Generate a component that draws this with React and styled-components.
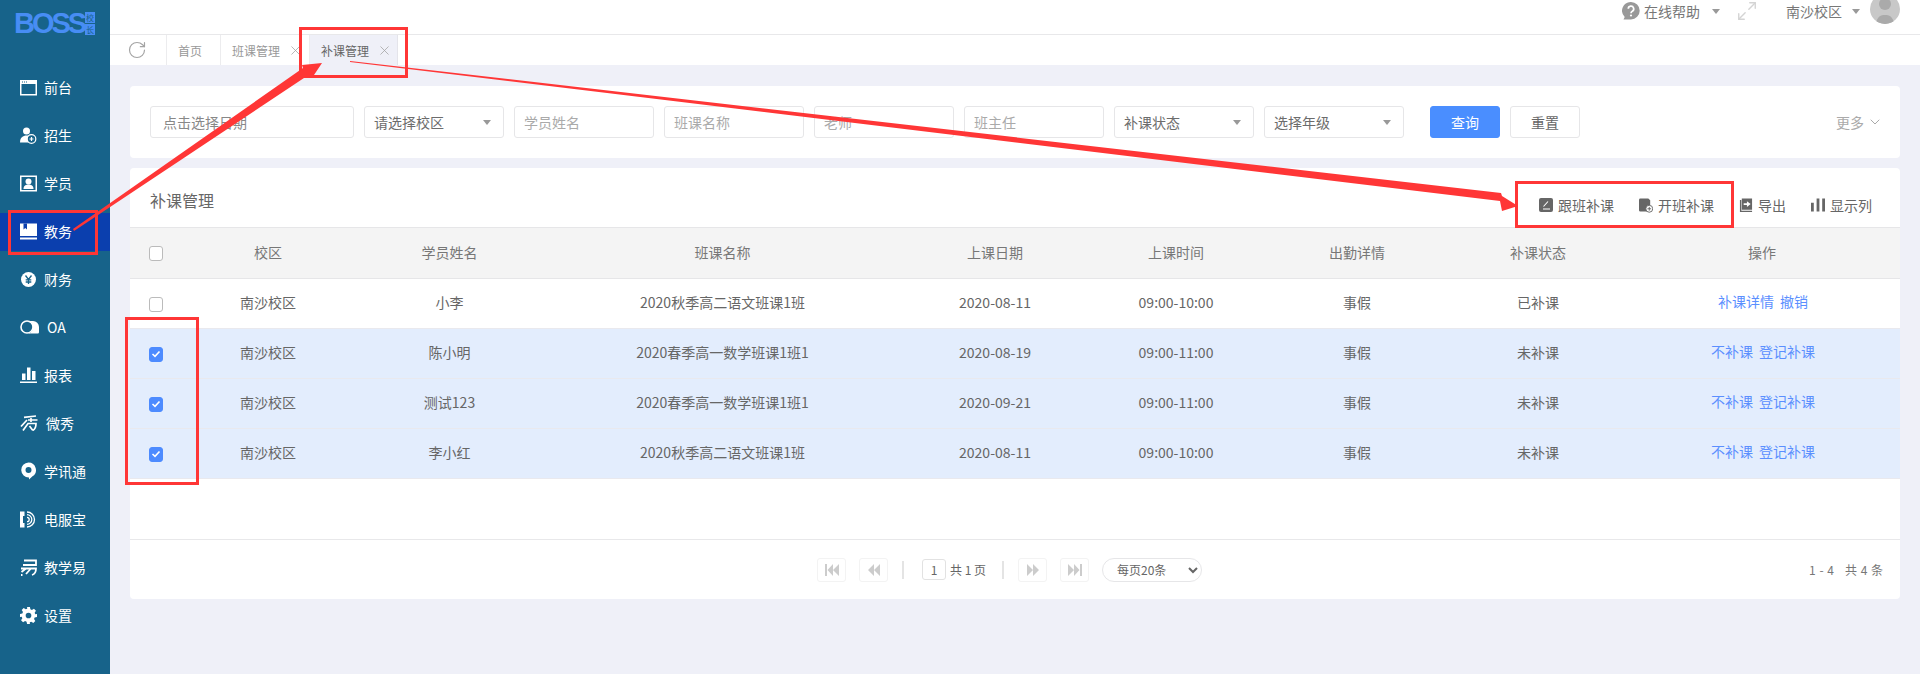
import React from "react";
import styled, { createGlobalStyle } from "styled-components";
import { RotateCw, X, ChevronDown, Maximize2 } from "lucide-react";

const Global = createGlobalStyle`
  html, body { margin: 0; padding: 0; height: 100%; }
  body { font-family: "Noto Sans CJK SC", "Noto Sans", "Liberation Sans", sans-serif; font-size: 14px; color: #666; background: #eff0f8; overflow: hidden; }
  * { box-sizing: border-box; }
`;

const Page = styled.div`position: relative; display: flex; width: 1920px; height: 674px; overflow: hidden;`;
const Sidebar = styled.aside`width: 110px; flex: none; background: #17638a; display: flex; flex-direction: column;`;
const Logo = styled.div`height: 64px; padding: 12px 0 0 14px; display: flex; align-items: flex-start;`;
const LogoWord = styled.span`font: 700 29px/22px "Liberation Sans", sans-serif; letter-spacing: -3px; color: #478df4; width: 71px;`;
const LogoSeal = styled.span`display: flex; flex-direction: column; gap: 1px; line-height: 0;`;
const SealChar = styled.span`width: 10px; height: 11px; background: #478df4; color: #17638a; font-size: 8px; line-height: 11px; text-align: center;`;
const NavList = styled.nav`display: flex; flex-direction: column;`;
const NavItem = styled.div`height: 48px; padding: 5px 0; display: flex; align-items: center;`;
const NavInner = styled.div`
  width: 100%; height: 38px; padding: 0 0 2px 20px; display: flex; align-items: center; gap: ${p => p.$gap}px;
  color: #fff; font-size: 14px; background: ${p => p.$active ? "#0b3fae" : "transparent"};
  svg { flex: none; }
`;
const Main = styled.div`flex: 1; min-width: 0; display: flex; flex-direction: column;`;
const TopBar = styled.header`height: 35px; flex: none; background: #fff; border-bottom: 1px solid #e8e8ea; display: flex; justify-content: flex-end; padding-right: 20px; overflow: hidden; color: #777;`;
const TopItem = styled.div`display: flex; align-items: center; height: 22px; margin-left: ${p => p.$ml || 0}px; gap: ${p => p.$gap || 0}px; white-space: nowrap;`;
const Caret = styled.span`width: 0; height: 0; border-left: 4px solid transparent; border-right: 4px solid transparent; border-top: 5px solid ${p => p.$c || "#999"}; flex: none;`;
const Avatar = styled.div`width: 30px; height: 30px; margin: -6px 0 0 10px; border-radius: 50%; background: #c8c8c8; overflow: hidden; flex: none;`;
const TabBar = styled.div`height: 30px; flex: none; background: #fff; display: flex; color: #999; font-size: 12px;`;
const Refresh = styled.div`width: 56px; padding-right: 2px; display: flex; align-items: center; justify-content: center; color: #a4a4a4;`;
const Tab = styled.div`
  width: ${p => p.$w}px; padding-left: 11px; display: flex; align-items: center; gap: 8px; border-left: 1px solid #ececee;
  background: ${p => p.$active ? "#eff0f8" : "#fff"}; color: ${p => p.$active ? "#666" : "#999"};
  ${p => p.$active ? "border-right: 1px solid #e4e4ea;" : ""}
  svg { color: #a0a0a0; flex: none; }
`;
const Content = styled.main`flex: 1; padding: 21px 20px 0; display: flex; flex-direction: column; gap: 10px;`;
const FilterCard = styled.section`height: 72px; background: #fff; border-radius: 4px; padding: 20px 20px; display: flex; align-items: flex-start;`;
const Field = styled.input`
  width: ${p => p.$w || 140}px; height: 32px; margin-right: 10px; padding: 0 ${p => p.$pl || 9}px; border: 1px solid #e6e6e8; border-radius: 3px; outline: none;
  background: #fff; font: inherit; font-size: 14px; color: #666;
  &::placeholder { color: ${p => p.$ph || "#aaa"}; opacity: 1; }
`;
const SelectBox = styled.div`
  width: 140px; height: 32px; margin-right: 10px; padding: 0 12px 0 9px; border: 1px solid #e6e6e8; border-radius: 3px; display: flex; align-items: center; justify-content: space-between; color: #6c6c6c;
`;
const Btn = styled.button`
  width: ${p => p.$w}px; height: 32px; margin-left: ${p => p.$ml || 0}px; border-radius: 3px; font: inherit; font-size: 14px; cursor: pointer;
  border: 1px solid ${p => p.$primary ? "#4a8eff" : "#e6e6e8"}; background: ${p => p.$primary ? "#4a8eff" : "#fff"}; color: ${p => p.$primary ? "#fff" : "#666"};
`;
const More = styled.div`margin: 0 -3px 0 auto; height: 32px; display: flex; align-items: center; gap: 3px; color: #aaa; svg { color: #aaa; }`;
const TableCard = styled.section`height: 431px; background: #fff; border-radius: 4px; display: flex; flex-direction: column; overflow: hidden;`;
const CardHead = styled.div`height: 60px; flex: none; padding: 15px 28px 0 20px; display: flex; align-items: center; border-bottom: 1px solid #e6e6e8;`;
const CardTitle = styled.h2`margin: 0 0 10px; font-size: 16px; font-weight: 400; color: #666;`;
const Tools = styled.div`margin-left: auto; display: flex; align-items: center; gap: 25px;`;
const Tool = styled.div`display: flex; align-items: center; gap: 5px; color: #666; svg { flex: none; }`;
const cols = "52px 172px 191px 355px 190px 172px 190px 172px 276px";
const TableWrap = styled.div`flex: 1; min-height: 0;`;
const HeadRow = styled.div`display: grid; grid-template-columns: ${cols}; height: 51px; padding-bottom: 3px; background: #f4f4f4; box-shadow: inset 0 -1px 0 #e6e6e8; align-items: center; text-align: center; color: #777;`;
const Row = styled.div`display: grid; grid-template-columns: ${cols}; height: 50px; padding-bottom: 4px; background: ${p => p.$sel ? "#e3edfd" : "#fff"}; box-shadow: inset 0 -1px 0 #e9e9ee; align-items: center; text-align: center; color: #666;`;
const CheckCell = styled.div`display: flex; justify-content: flex-end; padding-right: 19px; padding-top: ${p => p.$pt}px;`;
const Check = styled.span`
  width: 14px; height: 15px; border-radius: 3px; display: flex; align-items: center; justify-content: center;
  background: ${p => p.$on ? "#4d8bff" : "#fff"}; border: 1px solid ${p => p.$on ? "#4d8bff" : "#bbb"};
`;
const Actions = styled.div`display: flex; justify-content: center; gap: 6px; color: #5b8fff; padding: 0 0 3px 2px;`;
const Footer = styled.footer`height: 60px; flex: none; border-top: 1px solid #e8e8ea; display: grid; grid-template-columns: 687px auto 1fr; align-items: center; font-size: 12px; color: #666;`;
const Pager = styled.div`grid-column: 2; display: flex; align-items: center;`;
const PageBtn = styled.div`width: 29px; height: 24px; margin-right: ${p => p.$mr || 0}px; border: 1px solid #f3f3f3; border-radius: 3px; display: flex; align-items: center; justify-content: center;`;
const Sep = styled.span`width: 2px; height: 18px; background: #e4e4e4; margin: 0 ${p => p.$mr || 18}px 0 ${p => p.$ml || 14}px;`;
const PageNum = styled.div`width: 24px; height: 21px; border: 1px solid #e2e2e2; border-radius: 3px; text-align: center; line-height: 19px; margin-right: 4px; font-size: 12px;`;
const PageSize = styled.select`
  width: 100px; height: 24px; margin-left: 13px; padding-left: 10px; border: 1px solid #e6e6e8; border-radius: 12px; background: #fff; font: inherit; font-size: 12px; color: #666; outline: none;
`;
const Range = styled.div`grid-column: 3; justify-self: end; padding-right: 17px; word-spacing: 1px; color: #777;`;

const Overlay = styled.svg`position: absolute; left: 0; top: 0; width: 1920px; height: 674px; pointer-events: none;`;
const RedBox = styled.div`
  position: absolute; left: ${p => p.$x}px; top: ${p => p.$y}px; width: ${p => p.$w}px; height: ${p => p.$h}px;
  border: 3px solid #ff3636; pointer-events: none;
`;

const Calendar = () => <svg width="17" height="17" viewBox="0 0 17 17" fill="#fff"><path fillRule="evenodd" d="M0 1h17v15.500H0zM1.500 5v10h14V5zM2 2.500v1h1v-1zM4 2.500v1h1v-1zM6 2.500v1h1v-1z"/></svg>;
const UserPlus = () => <svg width="17" height="17" viewBox="0 0 17 17"><circle cx="6.500" cy="4" r="3.500" fill="#fff"/><path d="M0 15.500c0-5 3-7 6.500-7s4 1 4 1l-2 6z" fill="#fff"/><circle cx="11.500" cy="12" r="4.300" fill="#17638a" stroke="#fff" strokeWidth="1.200"/><path d="M9.500 12h4M11.500 10v4" stroke="#fff" strokeWidth="1.200"/></svg>;
const Student = () => <svg width="17" height="17" viewBox="0 0 17 17"><path fillRule="evenodd" fill="#fff" d="M0 .5h17v16H0zM1.500 2v13h14V2z"/><circle cx="8.500" cy="6.500" r="3" fill="#fff"/><path d="M3.500 14c0-3.500 2.500-4.500 5-4.500s5 1 5 4.500z" fill="#fff"/></svg>;
const Book = () => <svg width="17" height="17" viewBox="0 0 17 17"><path d="M0 .5h17v12.500H0z" fill="#fff"/><path d="M0 14.500h17v2H0z" fill="#fff"/><path d="M3.500 .5h3.500v6L5.250 5 3.500 6.500z" fill="#0b3fae"/></svg>;
const Yen = () => <svg width="17" height="17" viewBox="0 0 17 17"><circle cx="8.500" cy="8.500" r="7.500" fill="#fff"/><path d="M5.500 4.500l3 4 3-4M8.500 8.500v4.500M5.700 8.800h5.600M5.700 11h5.600" stroke="#17638a" strokeWidth="1.300" fill="none"/></svg>;
const Oa = () => <svg width="19" height="14" viewBox="0 0 19 14"><circle cx="7" cy="7" r="6" fill="none" stroke="#fff" strokeWidth="1.600"/><path d="M7.500 1h5.500a6 6 0 0 1 6 6v5c0 1-.6 1.500-1.500 1.500H8a6.400 6.400 0 0 0 0-12.500z" fill="#fff"/></svg>;
const Bars = () => <svg width="17" height="16" viewBox="0 0 17 16" fill="#fff"><path d="M2 6.500h3.500v6.500H2zM7 .5h3.500V13H7zM12 4h3.500v9H12zM0 14.500h17V16H0z"/></svg>;
const Xiu = () => <svg width="18" height="16" viewBox="0 0 18 16" fill="none" stroke="#fff" strokeWidth="1.700"><path d="M4 2.300L16 1M8 5h9.500M7 5L1 11.500M11 1.500v5.500M3 15.500L8 8.500h8c0 3-1 6-3.500 7M9.500 11l3 4"/></svg>;
const Pin = () => <svg width="17" height="18" viewBox="0 0 17 18"><path fillRule="evenodd" fill="#fff" d="M8.500 .5a7.500 7.500 0 0 1 4 13.800L9 17.500V15.500A7.500 7.500 0 0 1 8.500 .5zM8.500 5a3 3 0 1 0 0 6 3 3 0 0 0 0-6z"/></svg>;
const Phone = () => <svg width="17" height="17" viewBox="0 0 17 17" fill="none" stroke="#fff" strokeWidth="1.300"><path d="M0 .5h4.500v4.500H3v7h1.500v4.500H0z" fill="#fff" stroke="none"/><path d="M7 1a7.500 7.500 0 0 1 0 15M7 3.700a4.800 4.800 0 0 1 0 9.600M7 6.300a2.200 2.200 0 0 1 0 4.400"/></svg>;
const Yi = () => <svg width="17" height="17" viewBox="0 0 17 17" fill="none" stroke="#fff" strokeWidth="1.800"><path d="M4 1.500h12V6H3M1 9.500h15c0 3-.8 5.500-4 6.500M6 9.500L1.500 13M10.500 10L6 15M1 16h1.500"/></svg>;
const Gear = () => <svg width="17" height="17" viewBox="0 0 24 24" fill="#fff"><path fillRule="evenodd" d="M10 0h4l.7 3.300 2.100.9 2.900-1.800 2.800 2.800-1.800 2.900.9 2.100L24 10v4l-3.300.7-.9 2.100 1.800 2.900-2.800 2.800-2.900-1.800-2.100.9L14 24h-4l-.7-3.300-2.100-.9-2.900 1.800-2.800-2.800 1.800-2.900-.9-2.100L0 14v-4l3.300-.7.9-2.100-1.800-2.900 2.800-2.800 2.900 1.800 2.100-.9zM12 8a4 4 0 1 0 0 8 4 4 0 0 0 0-8z"/></svg>;

const nav = [
  ["前台", <Calendar />, 0], ["招生", <UserPlus />, 0], ["学员", <Student />, 0], ["教务", <Book />, 1],
  ["财务", <Yen />, 0], ["OA", <Oa />, 0], ["报表", <Bars />, 0], ["微秀", <Xiu />, 0],
  ["学讯通", <Pin />, 0], ["电服宝", <Phone />, 0], ["教学易", <Yi />, 0], ["设置", <Gear />, 0],
];

const Help = () => <svg width="18" height="18" viewBox="0 0 18 18"><path d="M9 0a8.700 8.700 0 0 1 0 17.400H1.500l1.200-2.500A8.700 8.700 0 0 1 9 0z" fill="#999"/><path d="M6.300 6.800a2.700 2.700 0 1 1 4 2.400c-.9.500-1.300 1-1.300 2" stroke="#fff" strokeWidth="1.700" fill="none"/><circle cx="9" cy="13.500" r="1.100" fill="#fff"/></svg>;
const Pen = () => <svg width="14" height="14" viewBox="0 0 14 14"><rect width="14" height="14" rx="2" fill="#666"/><path d="M4 11h7M4.500 8.500L9 3.500" stroke="#fff" strokeWidth="1.100"/></svg>;
const FilePlus = () => <svg width="14" height="15" viewBox="0 0 15 15"><path d="M0 1.500A1.500 1.500 0 0 1 1.500 0H10l2 2v12H1.500A1.500 1.500 0 0 1 0 12.500z" fill="#666"/><circle cx="11" cy="11" r="3.700" fill="#fff" stroke="#666" strokeWidth="1"/><path d="M9 11h4M11 9v4" stroke="#666" strokeWidth="1"/></svg>;
const Export = () => <svg width="14" height="15" viewBox="0 0 15 15"><path d="M1 1.500h1.500V13H14v1.500H1z" fill="#666"/><path d="M3 0h11v12H3z" fill="#666"/><path d="M5 5h3.500V3l4 3-4 3V7H5z" fill="#fff"/></svg>;
const Cols = () => <svg width="14" height="14" viewBox="0 0 15 14" fill="#666"><path d="M0 4.500h3V14H0zM6 0h3v14H6zM12 0h3v14h-3z"/></svg>;
const Tick = () => <svg width="10" height="8" viewBox="0 0 10 8"><path d="M1.500 4l2.500 2.300L8.500 1.500" stroke="#fff" strokeWidth="1.600" fill="none"/></svg>;
const Skip = ({ dir, bar }) => (
  <svg width="14" height="12" viewBox="0 0 14 12" fill="#ccc" style={dir === "r" ? { transform: "scaleX(-1)" } : undefined}>
    {bar && <path d="M0 0h2v12H0z" />}<path d={bar ? "M2.500 6L8 0v12zM8 6l6-6v12z" : "M1 6l6-6v12zM7 6l6-6v12z"} />
  </svg>
);

const rows = [
  ["南沙校区", "小李", "2020秋季高二语文班课1班", "2020-08-11", "09:00-10:00", "事假", "已补课", ["补课详情", "撤销"], false],
  ["南沙校区", "陈小明", "2020春季高一数学班课1班1", "2020-08-19", "09:00-11:00", "事假", "未补课", ["不补课", "登记补课"], true],
  ["南沙校区", "测试123", "2020春季高一数学班课1班1", "2020-09-21", "09:00-11:00", "事假", "未补课", ["不补课", "登记补课"], true],
  ["南沙校区", "李小红", "2020秋季高二语文班课1班", "2020-08-11", "09:00-10:00", "事假", "未补课", ["不补课", "登记补课"], true],
];

export default function App() {
  return (
    <Page>
      <Global />
      <Sidebar>
        <Logo>
          <LogoWord>BOSS</LogoWord>
          <LogoSeal><SealChar>校</SealChar><SealChar>长</SealChar></LogoSeal>
        </Logo>
        <NavList>
          {nav.map(([t, icon, a]) => (
            <NavItem key={t}><NavInner $active={!!a} $gap={t === "OA" ? 8 : t === "微秀" ? 8 : 7}>{icon}{t}</NavInner></NavItem>
          ))}
        </NavList>
      </Sidebar>
      <Main>
        <TopBar>
          <TopItem $gap={4}><Help />在线帮助</TopItem>
          <TopItem $ml={12}><Caret /></TopItem>
          <TopItem $ml={16}><Maximize2 size={22} strokeWidth={1.5} color="#d4d4d4" /></TopItem>
          <TopItem $ml={28}>南沙校区</TopItem>
          <TopItem $ml={10}><Caret /></TopItem>
          <Avatar>
            <svg width="30" height="30" viewBox="0 0 30 30"><circle cx="15" cy="10" r="6" fill="#aaa" /><path d="M6 30c1-8 5-9 9-9s8 1 9 9z" fill="#aaa" /></svg>
          </Avatar>
        </TopBar>
        <TabBar>
          <Refresh><RotateCw size={20} strokeWidth={1.4} /></Refresh>
          <Tab $w={54}>首页</Tab>
          <Tab $w={89}>班课管理<X size={15} strokeWidth={1.2} /></Tab>
          <Tab $w={89} $active>补课管理<X size={15} strokeWidth={1.2} /></Tab>
        </TabBar>
        <Content>
          <FilterCard>
            <Field $w={204} $pl={12} $ph="#888" placeholder="点击选择日期" />
            <SelectBox>请选择校区<Caret /></SelectBox>
            <Field placeholder="学员姓名" />
            <Field placeholder="班课名称" />
            <Field placeholder="老师" />
            <Field placeholder="班主任" />
            <SelectBox>补课状态<Caret /></SelectBox>
            <SelectBox>选择年级<Caret /></SelectBox>
            <Btn $primary $w={70} $ml={16}>查询</Btn>
            <Btn $w={70} $ml={10}>重置</Btn>
            <More>更多<ChevronDown size={16} strokeWidth={1.5} /></More>
          </FilterCard>
          <TableCard>
            <CardHead>
              <CardTitle>补课管理</CardTitle>
              <Tools>
                <Tool><Pen />跟班补课</Tool>
                <Tool><FilePlus />开班补课</Tool>
                <Tool><Export />导出</Tool>
                <Tool><Cols />显示列</Tool>
              </Tools>
            </CardHead>
            <TableWrap>
              <HeadRow>
                <CheckCell $pt={2}><Check /></CheckCell>
                <span>校区</span><span>学员姓名</span><span>班课名称</span><span>上课日期</span><span>上课时间</span><span>出勤详情</span><span>补课状态</span><span>操作</span>
              </HeadRow>
              {rows.map((r, i) => (
                <Row key={i} $sel={r[8]}>
                  <CheckCell $pt={4}><Check $on={r[8]}>{r[8] && <Tick />}</Check></CheckCell>
                  <span>{r[0]}</span><span>{r[1]}</span><span>{r[2]}</span><span>{r[3]}</span><span>{r[4]}</span><span>{r[5]}</span><span>{r[6]}</span>
                  <Actions><span>{r[7][0]}</span><span>{r[7][1]}</span></Actions>
                </Row>
              ))}
            </TableWrap>
            <Footer>
              <Pager>
                <PageBtn $mr={13}><Skip bar /></PageBtn>
                <PageBtn><Skip /></PageBtn>
                <Sep />
                <PageNum>1</PageNum>
                <span>共 1 页</span>
                <Sep $ml={16} $mr={14} />
                <PageBtn $mr={13}><Skip dir="r" /></PageBtn>
                <PageBtn><Skip dir="r" bar /></PageBtn>
                <PageSize defaultValue="20"><option value="20">每页20条</option></PageSize>
              </Pager>
              <Range>1 - 4 &nbsp; 共 4 条</Range>
            </Footer>
          </TableCard>
        </Content>
      </Main>

      <RedBox $x={299} $y={27} $w={109} $h={51} />
      <RedBox $x={8} $y={210} $w={90} $h={45} />
      <RedBox $x={125} $y={317} $w={74} $h={168} />
      <RedBox $x={1515} $y={181} $w={219} $h={47} />
      <Overlay viewBox="0 0 1920 674">
        <polygon points="73,229 74,231 307,76 312,78 322,63 302,65 303,68" fill="#ff3636" />
        <polygon points="350,61 350,62 1500,201 1502,211 1518,206 1502,196 1501,193" fill="#ff3636" />
      </Overlay>
    </Page>
  );
}
